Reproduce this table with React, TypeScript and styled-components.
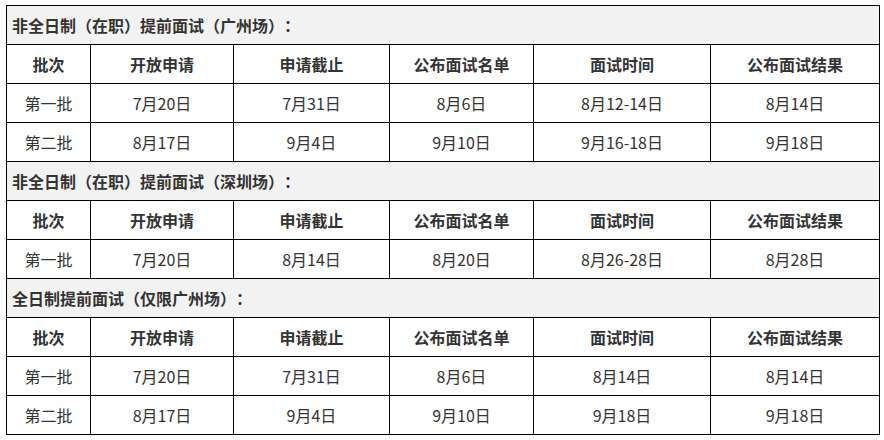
import styled, { createGlobalStyle } from 'styled-components';

const GlobalStyle = createGlobalStyle`
  body {
    margin: 0;
    background: #ffffff;
    font-family: "Noto Sans CJK SC", "Noto Sans", sans-serif;
  }
`;

const Page = styled.div`
  padding: 5px 6px;
`;

const Table = styled.table`
  width: 873px;
  border-collapse: collapse;
  table-layout: fixed;
  color: #333333;
  font-size: 16px;
  text-spacing-trim: space-all;
  font-kerning: none;
`;

const Row = styled.tr`
  height: 39px;
`;

const TitleCell = styled.td`
  background: #f2f2f2;
  border: 1px solid #000;
  font-weight: bold;
  text-align: left;
  padding: 0 0 0 5px;
  line-height: 20px;
`;

const Cell = styled.td<{ $head?: boolean }>`
  border: 1px solid #000;
  text-align: center;
  padding: 0;
  line-height: 20px;
  font-weight: ${(p) => (p.$head ? 'bold' : 'normal')};
`;

const headers = ['批次', '开放申请', '申请截止', '公布面试名单', '面试时间', '公布面试结果'];
const widths = [84, 143, 156, 144, 177, 169];

const sections = [
  {
    title: '非全日制（在职）提前面试（广州场）：',
    rows: [
      ['第一批', '7月20日', '7月31日', '8月6日', '8月12-14日', '8月14日'],
      ['第二批', '8月17日', '9月4日', '9月10日', '9月16-18日', '9月18日'],
    ],
  },
  {
    title: '非全日制（在职）提前面试（深圳场）：',
    rows: [['第一批', '7月20日', '8月14日', '8月20日', '8月26-28日', '8月28日']],
  },
  {
    title: '全日制提前面试（仅限广州场）：',
    rows: [
      ['第一批', '7月20日', '7月31日', '8月6日', '8月14日', '8月14日'],
      ['第二批', '8月17日', '9月4日', '9月10日', '9月18日', '9月18日'],
    ],
  },
];

const App = () => {
  return (
    <Page>
      <GlobalStyle />
      <Table>
        <colgroup>
          {widths.map((w, i) => (
            <col key={i} style={{ width: w }} />
          ))}
        </colgroup>
        <tbody>
          {sections.map((s) => [
            <Row key={s.title}>
              <TitleCell colSpan={6}>{s.title}</TitleCell>
            </Row>,
            <Row key={s.title + '-h'}>
              {headers.map((h) => (
                <Cell key={h} $head>
                  {h}
                </Cell>
              ))}
            </Row>,
            ...s.rows.map((r, i) => (
              <Row key={s.title + i}>
                {r.map((c, j) => (
                  <Cell key={j}>{c}</Cell>
                ))}
              </Row>
            )),
          ])}
        </tbody>
      </Table>
    </Page>
  );
};

export default App;
